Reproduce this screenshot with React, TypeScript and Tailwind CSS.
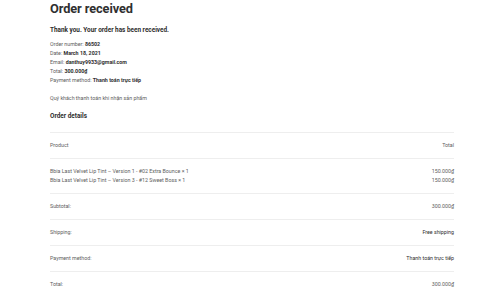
const items = [
  { name: "Bbia Last Velvet Lip Tint – Version 1 - #02 Extra Bounce", qty: 1, price: "150.000₫" },
  { name: "Bbia Last Velvet Lip Tint – Version 3 - #12 Sweet Boss", qty: 1, price: "150.000₫" },
];

const totals = [
  { label: "Subtotal:", value: "300.000₫", strong: false },
  { label: "Shipping:", value: "Free shipping", strong: true },
  { label: "Payment method:", value: "Thanh toán trực tiếp", strong: true },
  { label: "Total:", value: "300.000₫", strong: false },
];

export default function App() {
  return (
    <div className="w-[500px] h-[299px] overflow-hidden bg-white pl-[50px] pr-[46px] font-['Roboto',sans-serif] text-[#5e5e5e]">
      <h1 className="text-[12.8px] leading-[17px] font-bold text-[#2f2f2f] tracking-[-0.1px]">Order received</h1>
      <p className="mt-[9px] text-[6.4px] leading-[9px] font-bold text-[#2f2f2f]">
        Thank you. Your order has been received.
      </p>

      <ul className="mt-[5px] text-[5.3px] leading-[9.1px]">
        <li>
          Order number: <strong className="text-[#2f2f2f]">86502</strong>
        </li>
        <li>
          Date: <strong className="text-[#2f2f2f]">March 18, 2021</strong>
        </li>
        <li>
          Email: <strong className="text-[#2f2f2f]">danthuy9933@gmail.com</strong>
        </li>
        <li>
          Total: <strong className="text-[#2f2f2f]">300.000₫</strong>
        </li>
        <li>
          Payment method: <strong className="text-[#2f2f2f]">Thanh toán trực tiếp</strong>
        </li>
      </ul>

      <p className="mt-[8.5px] text-[5.3px] leading-[9px]">Quý khách thanh toán khi nhận sản phẩm</p>

      <h2 className="mt-[9.5px] text-[6.4px] leading-[9px] font-bold text-[#2f2f2f]">Order details</h2>

      <div className="mt-[11px] text-[5.3px]">
        <div className="h-[26px] border-t border-[#eeeeee] flex items-center justify-between">
          <span>Product</span>
          <span>Total</span>
        </div>
        <div className="h-[35px] border-t border-[#eeeeee] flex flex-col justify-center leading-[9px]">
          {items.map((it) => (
            <div key={it.name} className="flex justify-between">
              <span>
                {it.name} × {it.qty}
              </span>
              <span>{it.price}</span>
            </div>
          ))}
        </div>
        {totals.map((t) => (
          <div key={t.label} className="h-[26px] border-t border-[#eeeeee] flex items-center justify-between">
            <span>{t.label}</span>
            <span className={t.strong ? "text-[#2f2f2f]" : ""}>{t.value}</span>
          </div>
        ))}
      </div>
    </div>
  );
}
